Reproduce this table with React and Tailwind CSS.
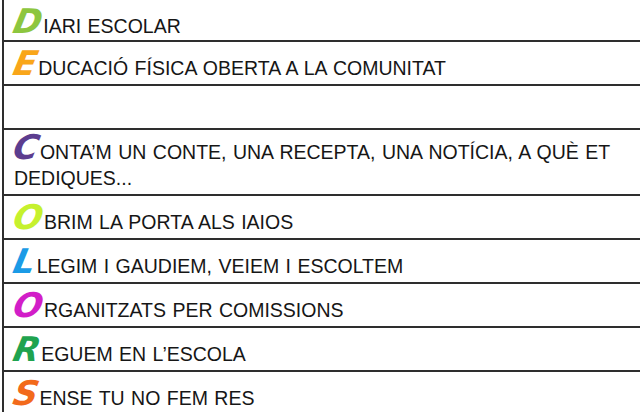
import React from 'react';

const rows = [
  { initial: 'D', color: 'text-[#8dc63f]', rest: 'IARI ESCOLAR', h: 'h-[42px]', pt: 'pt-[13px]' },
  { initial: 'E', color: 'text-[#f9a61a]', rest: 'DUCACIÓ FÍSICA OBERTA A LA COMUNITAT', h: 'h-[44px]', pt: 'pt-[13px]' },
  { initial: '', color: '', rest: '', h: 'h-[44px]', pt: 'pt-[13px]' },
  { initial: 'C', color: 'text-[#5c3d8f]', rest: 'ONTA’M UN CONTE, UNA RECEPTA, UNA NOTÍCIA, A QUÈ ET DEDIQUES...', h: 'h-[66px]', pt: 'pt-[9px]' },
  { initial: 'O', color: 'text-[#c6f12e]', rest: 'BRIM LA PORTA ALS IAIOS', h: 'h-[44px]', pt: 'pt-[13px]' },
  { initial: 'L', color: 'text-[#1b9be6]', rest: 'LEGIM I GAUDIEM, VEIEM I ESCOLTEM', h: 'h-[44px]', pt: 'pt-[13px]' },
  { initial: 'O', color: 'text-[#d21ec8]', rest: 'RGANITZATS PER COMISSIONS', h: 'h-[44px]', pt: 'pt-[13px]' },
  { initial: 'R', color: 'text-[#1fa34f]', rest: 'EGUEM EN L’ESCOLA', h: 'h-[44px]', pt: 'pt-[13px]' },
  { initial: 'S', color: 'text-[#f26a1b]', rest: 'ENSE TU NO FEM RES', h: 'h-[44px]', pt: 'pt-[13px]' },
];

const Row = ({ initial, color, rest, h, pt }) => (
  <div className={`${h} ${pt} border-b-2 border-[#2e2e2e] pl-[10px] pr-2 overflow-hidden`}>
    <p className="text-[19.5px] leading-[26px] [word-spacing:1px] text-[#161616]">
      {initial && (
        <span
          className={`${color} inline-block text-[34px] leading-[0] italic font-semibold -skew-x-12 mr-[1px]`}
          style={{ fontFamily: '"DejaVu Sans", sans-serif' }}
        >
          {initial}
        </span>
      )}
      {rest}
    </p>
  </div>
);

export default function App() {
  return (
    <div
      className="w-[640px] h-[412px] bg-white pl-[2px] overflow-hidden"
      style={{ fontFamily: '"Liberation Sans", Arial, sans-serif' }}
    >
      <div className="w-[660px] border-l-2 border-[#2e2e2e]">
        {rows.map((r, i) => (
          <Row key={i} {...r} />
        ))}
      </div>
    </div>
  );
}
